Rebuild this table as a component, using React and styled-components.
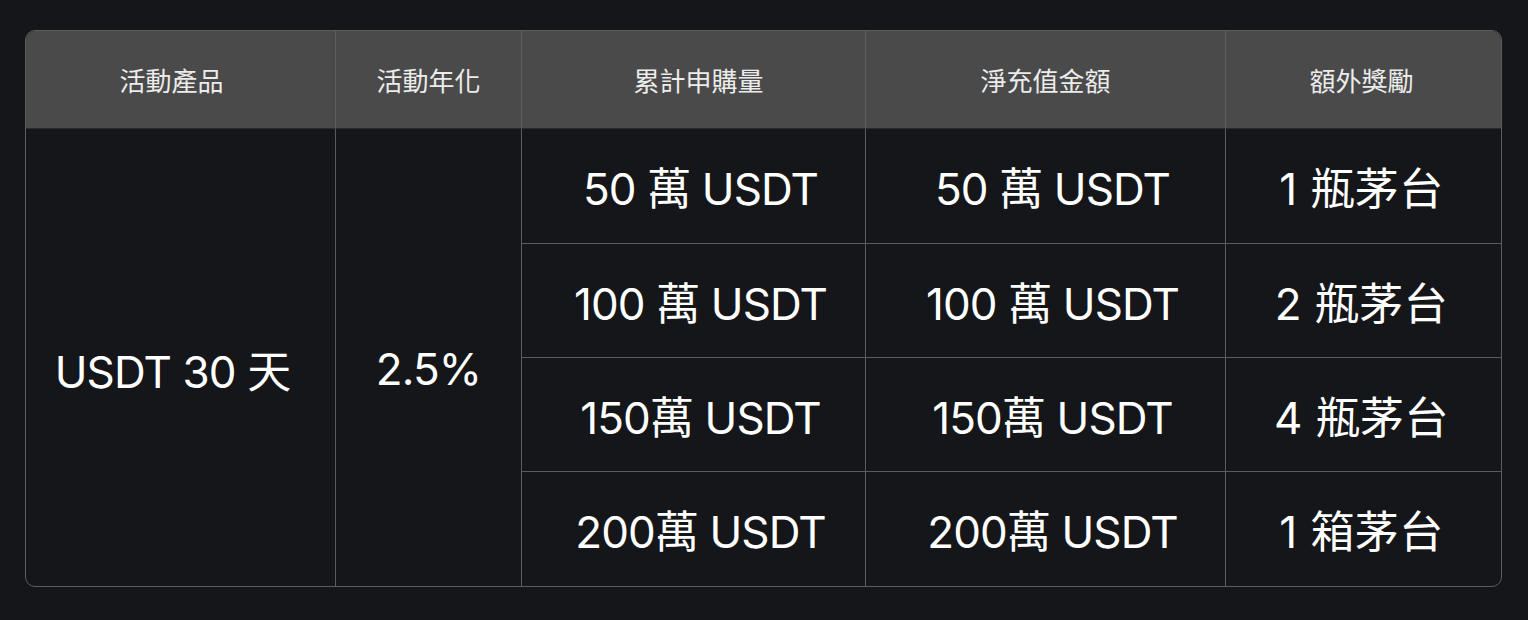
import styled, { createGlobalStyle } from 'styled-components'

const GlobalStyle = createGlobalStyle`
  html, body {
    margin: 0;
    padding: 0;
    background: #151619;
  }
  body {
    font-family: Inter, "Noto Sans CJK TC", sans-serif;
    color: #fff;
  }
`

const Page = styled.div`
  padding: 30px 26px 0 25px;
`

const Table = styled.div`
  width: 1477px;
  box-sizing: border-box;
  border: 1px solid #5c5c5c;
  border-radius: 10px;
  overflow: hidden;
  display: grid;
  grid-template-columns: 310px 186px 344px 360px 1fr;
  grid-template-rows: 98px 115px 114px 114px 114px;
`

const HeadCell = styled.div`
  box-sizing: border-box;
  background: #4a4a4a;
  border-bottom: 1px solid #2c2c2c;
  border-right: ${(p) => (p.last ? 'none' : '1px solid #5c5c5c')};
  display: flex;
  align-items: center;
  justify-content: center;
  padding-left: ${(p) => (p.shift > 0 ? p.shift : 0)}px;
  padding-right: ${(p) => (p.shift < 0 ? -p.shift : 0)}px;
  font-size: 26px;
  color: #ececec;
`

const Cell = styled.div`
  box-sizing: border-box;
  display: flex;
  align-items: center;
  justify-content: center;
  padding-left: ${(p) => (p.shift > 0 ? p.shift : 0)}px;
  padding-right: ${(p) => (p.shift < 0 ? -p.shift : 0)}px;
  font-size: 44px;
  letter-spacing: ${(p) => (p.last ? '0.01em' : '-0.02em')};
  color: #fff;
  border-right: ${(p) => (p.last ? 'none' : '1px solid #5c5c5c')};
  border-bottom: ${(p) => (p.bottom ? 'none' : '1px solid #5c5c5c')};
`

const SpanCell = styled(Cell)`
  grid-row: span 4;
  padding-top: 22px;
`

const headers = [
  { text: '活動產品', shift: -18 },
  { text: '活動年化', shift: 0 },
  { text: '累計申購量', shift: 10 },
  { text: '淨充值金額', shift: 0 },
  { text: '額外獎勵', shift: -4 },
]

const shifts = [14, 14, -4]

const rows = [
  ['50 萬 USDT', '50 萬 USDT', '1 瓶茅台'],
  ['100 萬 USDT', '100 萬 USDT', '2 瓶茅台'],
  ['150萬 USDT', '150萬 USDT', '4 瓶茅台'],
  ['200萬 USDT', '200萬 USDT', '1 箱茅台'],
]

const App = () => {
  return (
    <Page>
      <GlobalStyle />
      <Table>
        {headers.map((h, idx) => (
          <HeadCell key={h.text} shift={h.shift} last={idx === headers.length - 1}>
            {h.text}
          </HeadCell>
        ))}
        <SpanCell bottom shift={-16}>USDT 30 天</SpanCell>
        <SpanCell bottom>2.5%</SpanCell>
        {rows.map((row, r) =>
          row.map((item, c) => (
            <Cell
              key={`${r}-${c}`}
              shift={shifts[c]}
              last={c === 2}
              bottom={r === rows.length - 1}
            >
              {item}
            </Cell>
          ))
        )}
      </Table>
    </Page>
  )
}

export default App
